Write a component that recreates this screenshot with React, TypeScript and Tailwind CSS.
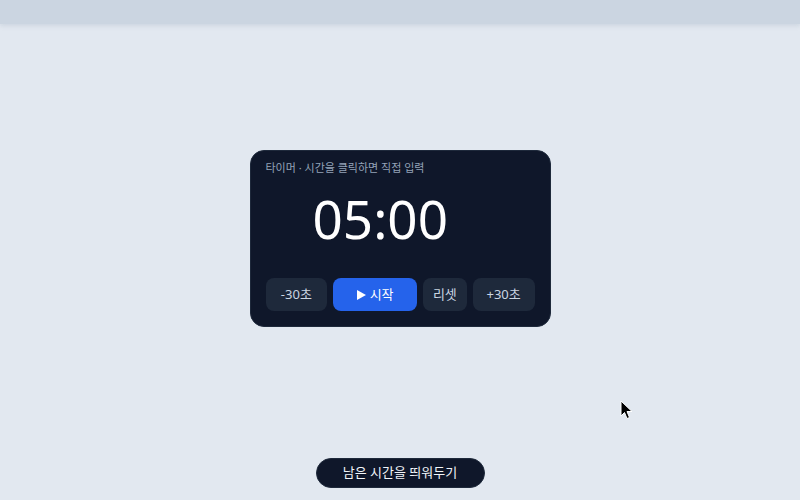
export default function App() {
  const font = { fontFamily: '"Noto Sans", "Noto Sans CJK KR", sans-serif' };

  return (
    <div
      className="relative flex h-screen flex-col bg-[#e2e8f0] text-slate-200"
      style={font}
    >
      {/* top bar */}
      <div className="h-6 shrink-0 bg-[#cbd5e1] shadow-[0_2px_4px_rgba(148,163,184,0.25)]" />

      {/* timer card */}
      <div className="flex flex-1 items-center justify-center">
        <div className="w-[301px] rounded-[14px] border border-[#1e293b] bg-[#0f172a] px-[15px] pb-[15px] pt-[9px]">
          <div className="text-[11px] leading-4 text-[#94a3b8]">
            타이머 · 시간을 클릭하면 직접 입력
          </div>
          <div className="mt-[17px] pl-[47px] text-[53px] leading-[52px] font-normal text-white">
            05:00
          </div>
          <div className="mt-[33px] flex gap-1.5 text-[13px]">
            <button className="h-[33px] w-[62px] rounded-lg bg-[#1e293b] text-slate-300">
              -30초
            </button>
            <button className="flex h-[33px] w-[84px] items-center justify-center gap-1 rounded-lg bg-[#2563eb] text-white">
              <svg width="9" height="10" viewBox="0 0 9 10">
                <path d="M0 0 L9 5 L0 10 Z" fill="white" />
              </svg>
              시작
            </button>
            <button className="h-[33px] w-[44px] rounded-lg bg-[#1e293b] text-slate-300">
              리셋
            </button>
            <button className="h-[33px] w-[62px] rounded-lg bg-[#1e293b] text-slate-300">
              +30초
            </button>
          </div>
        </div>
      </div>

      {/* bottom pill */}
      <div className="flex h-[47px] shrink-0 justify-center pt-[5px]">
        <button className="h-[30px] w-[169px] rounded-full border border-[#1e293b] bg-[#0f172a] text-[13px] text-slate-100">
          남은 시간을 띄워두기
        </button>
      </div>

      {/* mouse pointer */}
      <svg
        className="absolute left-[620px] top-[400px]"
        width="14"
        height="20"
        viewBox="0 0 14 20"
      >
        <path
          d="M1 1 L1 16 L4.5 12.5 L7 18.5 L9.5 17.5 L7 11.5 L12 11.5 Z"
          fill="black"
          stroke="white"
          strokeWidth="1"
          strokeLinejoin="round"
        />
      </svg>
    </div>
  );
}
